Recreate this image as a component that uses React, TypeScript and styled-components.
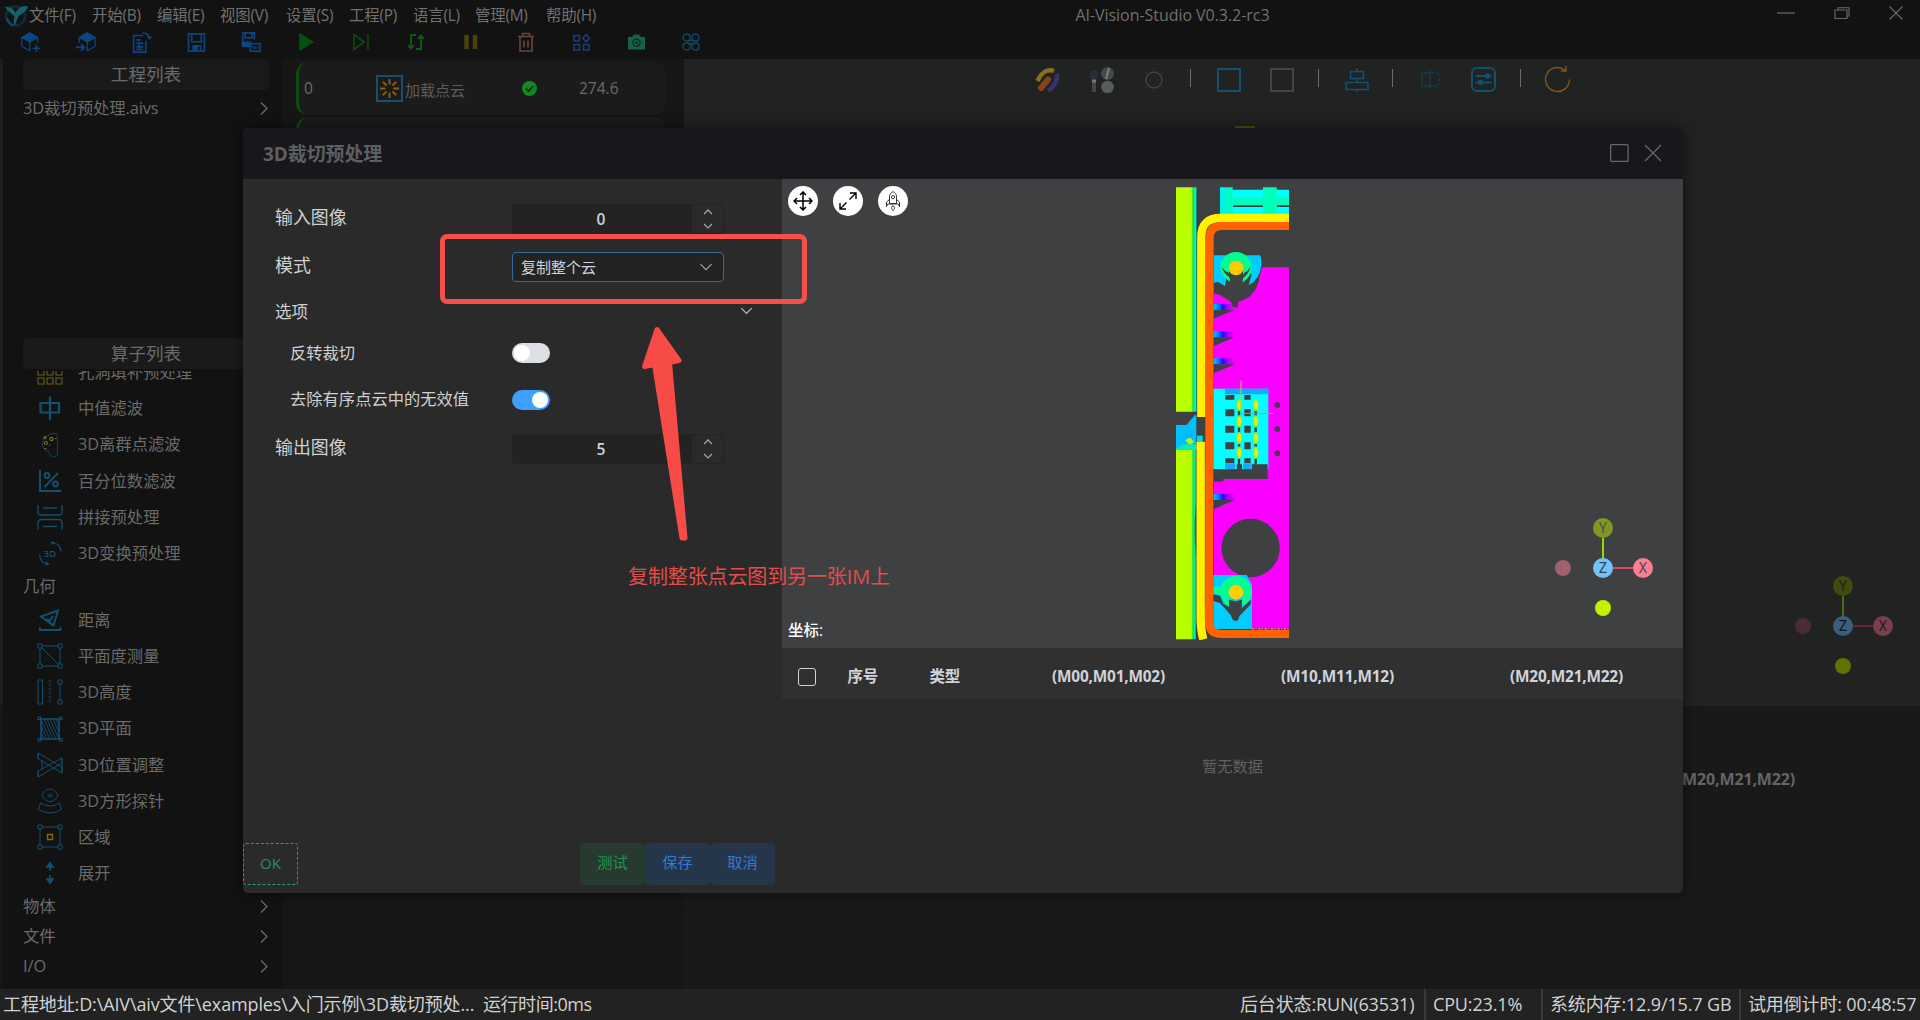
import React from "react";
import styled, { createGlobalStyle } from "styled-components";

const GlobalStyle = createGlobalStyle`
  * { box-sizing: border-box; }
  html, body { margin: 0; padding: 0; background: #121212; overflow: hidden; }
  body { font-family: "Open Sans", "Noto Sans CJK SC", sans-serif; font-size: 16px; line-height: 1; }
  svg { display: block; flex: none; }
`;

const blue = "#134f70";
const toolBlue = "#0b4683";
const olive = "#66601c";

/* ---------- window frame ---------- */

const Window = styled.div`
  position: relative;
  width: 1920px;
  height: 1020px;
  display: flex;
  flex-direction: column;
  background: #121212;
  color: #6b6b6b;
  overflow: hidden;
  white-space: nowrap;
`;

const Header = styled.header`
  height: 59px;
  flex: none;
  display: flex;
  flex-direction: column;
`;

const TitleBar = styled.div`
  height: 30px;
  display: grid;
  grid-template-columns: 1fr auto 1fr;
  align-items: center;
  padding-right: 17px;
`;

const MenuBar = styled.nav`
  display: flex;
  align-items: center;
  padding-left: 4px;
`;

const MenuItem = styled.span<{ $w: number }>`
  width: ${(p) => p.$w}px;
  font-size: 15.4px;
  letter-spacing: -0.2px;
  color: #707070;
  padding-top: 2px;
`;

const AppTitle = styled.span`
  font-size: 16px;
  letter-spacing: -0.05px;
  color: #707070;
  padding-left: 442px;
`;

const WindowControls = styled.div`
  display: flex;
  justify-content: flex-end;
  align-items: center;
  gap: 39px;
  padding-bottom: 4px;
`;

const Toolbar = styled.div`
  display: flex;
  padding-left: 3.5px;
  height: 24px;
`;

const ToolButton = styled.div`
  width: 55px;
  display: flex;
  align-items: center;
  justify-content: center;
`;

const Body = styled.div`
  flex: 1;
  display: flex;
  min-height: 0;
`;

/* ---------- sidebar ---------- */

const Edge = styled.div`
  width: 3px;
  background: linear-gradient(#1d1e1e 0 646px, #161616 646px);
`;

const Sidebar = styled.aside`
  width: 280px;
  display: flex;
  flex-direction: column;
  background: #121212;
`;

const ProjectPane = styled.section`
  height: 279px;
  padding-left: 20px;
`;

const OperatorPane = styled.section`
  flex: 1;
  min-height: 0;
  padding-left: 20px;
  display: flex;
  flex-direction: column;
`;

const PaneTitle = styled.h2`
  margin: 0;
  width: 246px;
  height: 31px;
  flex: none;
  display: flex;
  align-items: center;
  justify-content: center;
  border-radius: 5px;
  background: #1a1a1a;
  font-size: 17.6px;
  font-weight: 400;
  color: #6a6a6a;
`;

const GroupRow = styled.div<{ $h: number }>`
  height: ${(p) => p.$h}px;
  width: 245px;
  display: flex;
  align-items: center;
  justify-content: space-between;
  font-size: 16.4px;
  letter-spacing: -0.1px;
  color: #6a6a6a;
`;

const OperatorScroll = styled.div`
  margin-top: 2px;
  flex: 1;
  min-height: 0;
  overflow: hidden;
`;

const OperatorList = styled.div`
  margin-top: -16.8px;
`;

const OperatorRow = styled.div`
  height: 36.15px;
  display: flex;
  align-items: center;
  gap: 15px;
  padding-left: 14px;
  font-size: 16.3px;
  color: #6a6a6a;
`;

/* ---------- flow list ---------- */

const FlowPane = styled.section`
  width: 401px;
  background: #161616;
  padding: 3px 0 0 13px;
  display: flex;
  flex-direction: column;
  gap: 2px;
`;

const FlowCard = styled.div`
  width: 370px;
  height: 53px;
  flex: none;
  border-radius: 12px;
  border-left: 3px solid #0c4a10;
  background: #1b1b1b;
  display: grid;
  grid-template-columns: 72px 29px 117px 57px 1fr;
  align-items: center;
  padding-left: 5px;
  font-size: 15.5px;
`;

const FlowIcon = styled.div`
  width: 27px;
  height: 27px;
  border: 2px solid #17506e;
  display: flex;
  align-items: center;
  justify-content: center;
`;

const FlowName = styled.span`
  font-size: 15px;
  padding-top: 3px;
  color: #5c5c5c;
`;

/* ---------- background viewer ---------- */

const Stage = styled.main`
  flex: 1;
  display: flex;
  flex-direction: column;
  background: #191919;
`;

const StageCanvas = styled.div`
  position: relative;
  height: 647px;
  background: #202322;
`;

const StageTools = styled.div`
  display: flex;
  align-items: center;
  height: 41px;
  padding-left: 351px;
`;

const ToolSlot = styled.div<{ $w: number }>`
  width: ${(p) => p.$w}px;
  display: flex;
  align-items: center;
`;

const ToolDivider = styled.i`
  width: 1px;
  height: 18px;
  margin-top: -3px;
  background: #6b6b6b;
`;

const BackGizmo = styled.div`
  position: absolute;
  left: 1109px;
  top: 517px;
`;

const PointTip = styled.div`
  position: absolute;
  left: 551px;
  top: 67px;
  width: 20px;
  height: 2px;
  background: #4d4f12;
`;

const StageTable = styled.div`
  display: flex;
  justify-content: flex-end;
  padding: 65px 125px 0 0;
  font-size: 16px;
  font-weight: 700;
  letter-spacing: -0.15px;
  color: #656565;
`;

/* ---------- status bar ---------- */

const StatusBar = styled.footer`
  height: 31px;
  flex: none;
  display: flex;
  align-items: center;
  background: #222;
  color: #d2d2d2;
  font-size: 18px;
  letter-spacing: -0.15px;
  padding: 0 0 1px 3px;
`;

const StatusPath = styled.span`
  width: 480px;
  letter-spacing: -0.12px;
`;

const StatusTime = styled.span`
  letter-spacing: -0.45px;
`;

const StatusCell = styled.span<{ $w: number }>`
  width: ${(p) => p.$w}px;
  height: 31px;
  margin-bottom: -1px;
  display: flex;
  align-items: center;
  padding: 0 0 1px 7px;
  border-left: 2px solid #3a3a3a;
`;

const StatusRun = styled.span`
  margin-left: auto;
  width: 184px;
`;

/* ---------- dialog ---------- */

const Dialog = styled.section`
  position: absolute;
  left: 243px;
  top: 128px;
  width: 1440px;
  height: 765px;
  display: flex;
  flex-direction: column;
  border-radius: 5px;
  background: #2a2a2a;
  box-shadow: 0 0 14px rgba(0, 0, 0, 0.5);
  overflow: hidden;
`;

const DialogHead = styled.div`
  height: 51px;
  flex: none;
  display: flex;
  align-items: center;
  padding: 0 21px 1px 20px;
  background: #18171c;
`;

const DialogTitle = styled.h1`
  margin: 0 auto 0 0;
  padding-top: 2px;
  font-size: 18.9px;
  font-weight: 700;
  color: #5e5f62;
`;

const DialogBody = styled.div`
  flex: 1;
  display: flex;
  min-height: 0;
`;

const FormPane = styled.div`
  width: 539px;
  display: flex;
  flex-direction: column;
  padding-top: 16px;
`;

const FormRow = styled.div<{ $h: number; $indent?: boolean }>`
  height: ${(p) => p.$h}px;
  display: grid;
  grid-template-columns: ${(p) => (p.$indent ? 222 : 237)}px 212px 1fr;
  align-items: center;
  padding-left: ${(p) => (p.$indent ? 47 : 32)}px;
`;

const Label = styled.label<{ $size: number; $up?: number }>`
  font-size: ${(p) => p.$size}px;
  padding-bottom: ${(p) => p.$up ?? 0}px;
  color: #cfd0d2;
`;

const NumberBox = styled.div`
  height: 30px;
  display: flex;
  border-radius: 4px;
  background: #232323;
`;

const NumberValue = styled.span`
  width: 178px;
  display: flex;
  align-items: center;
  justify-content: center;
  padding-top: 2px;
  font-size: 15.5px;
  font-weight: 600;
  color: #cfd3dc;
`;

const Steppers = styled.div`
  width: 31px;
  margin: 1px 0 1px 2px;
  display: flex;
  flex-direction: column;
  align-items: center;
  justify-content: space-around;
  border-radius: 0 4px 4px 0;
  background: #2a2a2a;
`;

const SelectBox = styled.div`
  height: 30px;
  display: flex;
  align-items: center;
  justify-content: space-between;
  padding: 0 10px 0 8px;
  border: 1px solid #34699f;
  border-radius: 4px;
  background: #232323;
  color: #cfd3dc;
  font-size: 15px;
`;

const FoldMark = styled.div`
  padding: 0 0 2px 16px;
`;

const Switch = styled.div<{ $on?: boolean }>`
  width: 38px;
  height: 20px;
  display: flex;
  align-items: center;
  justify-content: ${(p) => (p.$on ? "flex-end" : "flex-start")};
  padding: 0 2px;
  border-radius: 10px;
  background: ${(p) => (p.$on ? "#409eff" : "#dcdfe6")};
  &::after {
    content: "";
    width: 16px;
    height: 16px;
    border-radius: 50%;
    background: #fff;
  }
`;

const FormFooter = styled.div`
  margin-top: auto;
  height: 50px;
  display: flex;
  padding-right: 7px;
`;

const OkButton = styled.button`
  width: 55px;
  height: 42px;
  margin: 0 auto 0 0;
  padding: 0 0 2px;
  border: 1px dashed #2f9e63;
  border-radius: 3px;
  background: transparent;
  color: #2c915c;
  font: inherit;
  font-size: 15px;
`;

const ActionButton = styled.button<{ $tone: "green" | "blue" }>`
  width: 65px;
  height: 42px;
  padding: 0 0 2px;
  border: 0;
  border-radius: 4px;
  background: ${(p) => (p.$tone === "green" ? "#273a2f" : "#26364a")};
  color: ${(p) => (p.$tone === "green" ? "#259458" : "#2f7bd3")};
  font: inherit;
  font-size: 15.2px;
`;

const ResultPane = styled.div`
  flex: 1;
  display: flex;
  flex-direction: column;
`;

const CloudView = styled.div`
  position: relative;
  height: 469px;
  display: flex;
  flex-direction: column;
  justify-content: space-between;
  padding: 7px 5px 10px 6px;
  background: #3f4041;
`;

const ViewButtons = styled.div`
  display: flex;
  gap: 15px;
`;

const RoundButton = styled.div`
  width: 30px;
  height: 30px;
  display: flex;
  align-items: center;
  justify-content: center;
  border-radius: 50%;
  background: #fff;
`;

const CloudLayer = styled.div`
  position: absolute;
  left: 394px;
  top: 8px;
`;

const FrontGizmo = styled.div`
  position: absolute;
  left: 771px;
  top: 339px;
`;

const Coords = styled.span`
  font-size: 15.5px;
  font-weight: 500;
  color: #fff;
`;

const TableHead = styled.div`
  height: 51px;
  display: grid;
  grid-template-columns: 66px 82px 107px 229px 229px 1fr;
  align-items: center;
  padding: 6px 0 0 15px;
  background: #303030;
  color: #cfd3dc;
  font-size: 15.4px;
  font-weight: 700;
  letter-spacing: -0.2px;
`;

const HeadWord = styled.span`
  font-size: 15.5px;
  margin-left: -15.500px;
`;

const CheckBox = styled.i`
  width: 18px;
  height: 18px;
  margin-top: 1px;
  margin-left: 0.500px;
  border: 1.5px solid #cfd3dc;
  border-radius: 3px;
`;

const Empty = styled.div`
  padding-top: 60px;
  text-align: center;
  font-size: 15.2px;
  color: #616164;
`;

/* ---------- annotation layer ---------- */

const RedFrame = styled.div`
  position: absolute;
  left: 440px;
  top: 234px;
  width: 367px;
  height: 70px;
  border: 5px solid #f44f49;
  border-radius: 7px;
`;

const ArrowLayer = styled.div`
  position: absolute;
  left: 636px;
  top: 320px;
`;

const RedNote = styled.div`
  position: absolute;
  left: 628px;
  top: 567px;
  font-size: 20px;
  letter-spacing: -0.12px;
  color: #e34c47;
`;

/* ---------- icons ---------- */

type IconProps = {
  w?: number;
  h?: number;
  box?: string;
  color?: string;
  sw?: number;
  children: React.ReactNode;
};

const Icon = ({ w = 24, h = w, box = "0 0 24 24", color = blue, sw = 1.5, children }: IconProps) => (
  <svg width={w} height={h} viewBox={box} fill="none" stroke={color} strokeWidth={sw}>
    {children}
  </svg>
);

const Chevron = ({ dir, size = 13, color = "#6f6f6f", sw = 1.2 }: { dir: "right" | "up" | "down"; size?: number; color?: string; sw?: number }) => {
  if (dir === "right")
    return (
      <Icon w={size / 2 + 2} h={size + 2} box="0 0 8.5 15" color={color} sw={sw}>
        <path d="M1 1.5l6 6-6 6" />
      </Icon>
    );
  return (
    <Icon w={size + 2} h={size / 2 + 2} box="0 0 15 8.5" color={color} sw={sw * (15 / (size + 2))}>
      <path d={dir === "up" ? "M1.5 7.2l6-6 6 6" : "M1.5 1.2l6 6 6-6"} />
    </Icon>
  );
};

const Logo = () => (
  <svg width="25" height="25" viewBox="0 0 25 25" fill="none">
    <circle cx="11.500" cy="13" r="9.500" stroke="#0b2a3c" strokeWidth="3" />
    <path d="M1 4c5-1 8 1 10.500 6C14 5 18 2 24 3.500 22.500 8 20 10 16.500 11.500c-3 2-3.500 5-5.500 11.500-2-5-1-8-.500-9.500C8 10.500 4 9 1 4z" fill="#15606b" />
    <path d="M3 15c1 4 3 6 6 7.500" stroke="#0f4f60" strokeWidth="2" />
  </svg>
);

const tools: React.ReactNode[] = [
  <Icon color={toolBlue} w={20}>
    <path d="M10.500 1L20 6.500l-9.500 5.500L1 6.500z" fill={toolBlue} />
    <path d="M1 6.500V17l9.500 5.500V12M20 6.500V13" />
    <path d="M18.500 15v9M14 19.500h9" strokeWidth={2} />
  </Icon>,
  <Icon color={toolBlue} w={20}>
    <path d="M13.500 1L23 6.500 13.500 12 4 6.500z" fill={toolBlue} />
    <path d="M23 6.500V17l-9.500 5.500V12M4 6.500V13" />
    <path d="M0 18.500h9M6 14.500l4 4-4 4" strokeWidth={2.2} />
  </Icon>,
  <Icon color={toolBlue} w={21}>
    <path d="M14 4H3v19h14V10M6 9h5M6 13h8M6 17h8M6 20h8M9 11v9" strokeWidth={1.8} />
    <path d="M13 1.500c5-.500 7.500 1.500 8 6M18.500 5l2.500 3 2.500-3" strokeWidth={1.6} />
  </Icon>,
  <Icon color={toolBlue} w={19}>
    <path d="M2 1h20v22H2z" strokeWidth={2} />
    <path d="M6 1h12v10H6zM8 23v-7h9v7" strokeWidth={2} />
    <path d="M8 16h5v7H8z" fill={toolBlue} />
  </Icon>,
  <Icon color={toolBlue} w={20}>
    <path d="M2 1h14v9M2 1v16h8M5 1v6h8V1" strokeWidth={2} />
    <path d="M3 12h9v5H3z" fill={toolBlue} />
    <path d="M11 14h12v9H11zM14 17v3M17 17v3M20 17v3" strokeWidth={1.7} />
  </Icon>,
  <Icon w={16} h={20} box="0 0 16 20" color="#07510e">
    <path d="M2 2l12.500 8L2 18z" fill="#07510e" />
  </Icon>,
  <Icon w={18} h={18} box="0 0 18 18" color="#0d4a14" sw={1.6}>
    <path d="M2 1.500l10 7.500L2 16.500zM16 1v16" />
  </Icon>,
  <Icon w={18} h={18} box="0 0 18 18" color="#0f5a16" sw={1.9}>
    <path d="M9 2H4v13M1 12l3 3.500L7 12M9 16h5V3M11 6l3-3.500L17 6" />
  </Icon>,
  <Icon w={16} h={16} box="0 0 16 16" color="#4b400f" sw={4.5}>
    <path d="M3.500 1v14M12 1v14" />
  </Icon>,
  <Icon w={18} h={20} box="0 0 18 20" color="#6a4440" sw={1.6}>
    <path d="M1 4.500h16M5.500 4.500V1.500h7v3M3 4.500V19h12V4.500M7 8.500v7M11 8.500v7" />
  </Icon>,
  <Icon w={17} h={17} box="0 0 17 17" color="#1d3c78" sw={1.6}>
    <path d="M1 1.500h5.500V7H1zM1 10.500h5.500V16H1zM10.500 10.500H16V16h-5.500zM13.200.500l3.400 3.700-3.400 3.700-3.400-3.700z" />
  </Icon>,
  <Icon w={19} h={16} box="0 0 19 16" color="none">
    <path d="M1 3h4l2-2.500h5L14 3h4v12.500H1z" fill="#176246" />
    <circle cx="9.500" cy="8.700" r="3.600" stroke="#10231b" strokeWidth="1.200" />
    <circle cx="9.500" cy="8.700" r="1.300" fill="#10231b" />
  </Icon>,
  <Icon w={18} h={18} box="0 0 18 18" color="#124563" sw={1.4}>
    <rect x="1" y="1" width="7" height="7" rx="3.200" />
    <rect x="10" y="1" width="7" height="7" rx="3.200" />
    <rect x="1" y="10" width="7" height="7" rx="3.200" />
    <rect x="10" y="10" width="7" height="7" rx="3.200" />
    <path d="M6 7.500h6M6 10.500h6" />
  </Icon>,
];

const opIcon = (color: string, body: React.ReactNode, sw = 1.1) => (
  <Icon w={26} box="0 0 26 26" color={color} sw={sw}>
    {body}
  </Icon>
);

const OP = {
  grid: opIcon(
    olive,
    <path d="M1 1h6v6H1zM10 1h6v6h-6zM19 1h6v6h-6zM1 10h6v6H1zM10 10h6v6h-6zM19 10h6v6h-6zM1 19h6v6H1zM10 19h6v6h-6zM19 19h6v6h-6z" />
  ),
  median: opIcon(blue, <path d="M3.500 8h18.500v9.500H3.500zM13 1.500V25" />, 2.2),
  outlier: opIcon(
    blue,
    <>
      <path d="M11 4c2-3.500 9-3.500 9.500 0v17c0 5-7 5-8 0-1-4-4-1-6-5C4 10 6 6 11 4z" opacity="0.700" />
      <g stroke="#77701a" strokeWidth="1.200">
        <circle cx="14.500" cy="7" r="1.700" />
        <circle cx="9" cy="11" r="1.500" />
        <circle cx="8" cy="5.500" r="1" />
        <path d="M12 13h1.500M7.500 16.500h2M18 6.500h1.500" />
      </g>
    </>
  ),
  percent: opIcon(
    blue,
    <>
      <path d="M3 2v21h21M7.500 19L21 5" />
      <circle cx="10" cy="7.500" r="2.400" />
      <circle cx="18.500" cy="16" r="2.400" />
    </>,
    2
  ),
  stitch: opIcon(blue, <path d="M1 1v6.500q0 3.500 3.500 3.500h17q3.500 0 3.500-3.500V1M6 4h14M1 25.500V19q0-3.500 3.500-3.500h17q3.500 0 3.500 3.500v6.500M6 22.500h14" />, 1.3),
  transform: opIcon(
    blue,
    <>
      <path d="M15 2.500c5 .500 8.500 4 9 9M11 24c-5-.500-8-4-8.500-9" />
      <path d="M13 2.500l4-1.500v4zM13 24l-4 1.500v-4z" fill={blue} stroke="none" />
      <text x="13" y="16.500" fill={blue} stroke="none" fontSize="9.500" fontWeight="600" textAnchor="middle">
        3D
      </text>
    </>,
    1.2
  ),
  distance: opIcon(blue, <path d="M4 9.500L21 3.500 16.500 18.500zM10 12l3 1.500 3-4.500M3 20.500V23h20.500v-2.500" />, 2),
  flatness: opIcon(
    blue,
    <path d="M1 1h4v4H1zM21 1h4v4h-4zM1 21h4v4H1zM21 21h4v4h-4zM5 3h16M5 23h16M3 5v16M23 5v16M5 5l16 16" />,
    1
  ),
  height: opIcon(
    blue,
    <>
      <path d="M1 1h4.500v24H1zM21 1h4v4h-4zM21 21h4v4h-4zM23 5v16" />
      <path d="M13 1v24" strokeDasharray="2.500 1.500" />
    </>,
    1
  ),
  plane: opIcon(
    blue,
    <>
      <path d="M4 3h18v20H4z" strokeWidth="1.600" />
      <path d="M1 1h2.500v2.500H1zM22.500 1H25v2.500h-2.500zM1 22.500h2.500V25H1zM22.500 22.500H25V25h-2.500z" />
      <path d="M4 4l9 19M7 3l9 20M10 3l9 20M13 3l9 20M16 3l6 13M19 3l3 7M4 10l6 13M4 16l3 7" strokeWidth="0.900" />
    </>
  ),
  adjust: opIcon(blue, <path d="M1 1l24 14v6L1 6.500zM1 25l24-14V6L1 19zM1 1v6M25 6v15M1 19v6M5 8v10" />, 1),
  probe: opIcon(
    blue,
    <path d="M5 7.500C9-1 17-1 21 7.500 17 15.500 9 15.500 5 7.500zM10.500 7.500q2.500-3 5 0-2.500 3-5 0M3.500 15q9.500 6 19 0l2 6.500q-11.500 7-23 0z" />,
    1
  ),
  region: opIcon(
    blue,
    <>
      <path d="M1 1h4v4H1zM21 1h4v4h-4zM1 21h4v4H1zM21 21h4v4h-4zM5 3h16M5 23h16M3 5v16M23 5v16" />
      <path d="M10.500 10.500h5v5h-5z" stroke="#7a6d14" strokeWidth="1.400" />
    </>,
    1
  ),
  expand: opIcon(blue, <path d="M13 5v6M13 15v6M10 7l3-4 3 4zM10 19l3 4 3-4z" fill={blue} />, 1.7),
};

const firstOps: [React.ReactNode, string][] = [
  [OP.grid, "孔洞填补预处理"],
  [OP.median, "中值滤波"],
  [OP.outlier, "3D离群点滤波"],
  [OP.percent, "百分位数滤波"],
  [OP.stitch, "拼接预处理"],
  [OP.transform, "3D变换预处理"],
];

const geometryOps: [React.ReactNode, string][] = [
  [OP.distance, "距离"],
  [OP.flatness, "平面度测量"],
  [OP.height, "3D高度"],
  [OP.plane, "3D平面"],
  [OP.adjust, "3D位置调整"],
  [OP.probe, "3D方形探针"],
  [OP.region, "区域"],
  [OP.expand, "展开"],
];

const menus: [string, number][] = [
  ["文件(F)", 63],
  ["开始(B)", 65],
  ["编辑(E)", 63],
  ["视图(V)", 66],
  ["设置(S)", 63],
  ["工程(P)", 64],
  ["语言(L)", 62],
  ["管理(M)", 71],
  ["帮助(H)", 56],
];

const Gizmo = ({ dim }: { dim?: boolean }) => {
  const c = dim
    ? { y: "#414b10", z: "#38607e", x: "#7c3f4d", nx: "#4a2c34", ny: "#5f7400", ly: "#4b6b0e", lx: "#6f2230", t: "#10161a" }
    : { y: "#829525", z: "#74c1fb", x: "#fd7d95", nx: "#9f6070", ny: "#c3f000", ly: "#93d90f", lx: "#d34a61", t: "#33414a" };
  return (
    <svg width="100" height="100" viewBox="0 0 100 100" fontSize="14" textAnchor="middle" fontFamily="Roboto">
      <path d="M50 50V20" stroke={c.ly} strokeWidth="2" />
      <path d="M50 50H84" stroke={c.lx} strokeWidth="2" />
      <circle cx="50" cy="10" r="10" fill={c.y} />
      <circle cx="10" cy="50" r="8" fill={c.nx} />
      <circle cx="90" cy="50" r="10" fill={c.x} />
      <circle cx="50" cy="50" r="10" fill={c.z} />
      <circle cx="50" cy="90" r="8" fill={c.ny} />
      <text x="50" y="15" fill={c.t} opacity="0.700">Y</text>
      <text x="50" y="55" fill={c.t}>Z</text>
      <text x="90" y="55" fill={c.t} opacity="0.800">X</text>
    </svg>
  );
};

const bg = "#3f4041";

const PointCloud = () => (
  <svg width="113" height="453" viewBox="48 51 339 1359">
    <defs>
      <linearGradient id="edge" x1="0" x2="1">
        <stop offset="0" stopColor="#78f000" />
        <stop offset="0.400" stopColor="#00e878" />
        <stop offset="1" stopColor="#00ffee" />
      </linearGradient>
      <linearGradient id="slot" x1="0" x2="1">
        <stop offset="0" stopColor="#00c8ff" />
        <stop offset="0.340" stopColor="#0050ff" />
        <stop offset="0.420" stopColor="#3000ff" />
        <stop offset="0.650" stopColor="#a800ff" />
        <stop offset="1" stopColor="#fa00ff" />
      </linearGradient>
      <linearGradient id="teal" x1="0" x2="1">
        <stop offset="0" stopColor="#00f0f0" />
        <stop offset="1" stopColor="#00ffb8" />
      </linearGradient>
    </defs>
    {/* left rail */}
    <path d="M48 52h48v673H48zM48 838h48v570H48z" fill="#b9ff00" />
    <path d="M95 52h14v673H95zM95 838h12v570H95z" fill="url(#edge)" />
    <path d="M48 765h32l14-18 11-12h4v103H48z" fill="#00bfff" />
    <path d="M48 838q14-14 30-16l31 2v16H48z" fill="#00f0b0" />
    <path d="M76 812q8-12 18-6l8 10-12 8z" fill="#b9f020" />
    <path d="M107 1000q-6 80 0 160v-160z" fill={bg} />
    {/* connector at the top */}
    <path d="M180 59h207v73H180z" fill="#00ffff" />
    <path d="M180 52h38v80h-38z" fill="url(#teal)" />
    <path d="M218 82h169v24H218zM309 52h41v80h-41z" fill="#00ffbb" />
    <path d="M220 106h89v5h-89zM351 106h36v5h-36z" fill={bg} />
    {/* seal */}
    <path d="M387 144H182q-58 0-58 56V741" fill="none" stroke="#fff200" strokeWidth="25" />
    <path d="M122 815V1340q0 40 8 68" fill="none" stroke="#fff200" strokeWidth="25" />
    <path d="M111 797h17v19h-17z" fill="#00d8f0" />
    {/* base plate */}
    <path d="M306 292h81v1084H161V370l20 6 25 15 10 10 2 11h16v-15q20-8 36-18 24-22 29-60z" fill="#fa00ff" />
    {[402, 484, 565, 972].map((y) => (
      <rect key={y} x="161" y={y} width="64" height="18" fill="url(#slot)" />
    ))}
    <path d="M161 420h62l-62 26zM161 502h62l-62 26zM161 583h64l-64 27zM161 990h62l-62 28z" fill={bg} />
    <path d="M216 396h18v16h-16z" fill={bg} />
    {/* upper screw post */}
    <path d="M161 256h40v60l-6 32-20-12-14 2zM255 256h44q6 4 5 30-4 42-38 60l8-30z" fill="#00ccff" />
    <path d="M181 294a47 48 0 1 1 94 0q0 14-6 22-8 14-22 22l4-22-6-22h-34l-6 22 10 20-10-4q-14-10-18-20-6-8-6-18z" fill="#00ff90" />
    <path d="M184 290q10 14 22 18l2 14q-16-12-24-32zM272 290q-10 14-20 20l-6 16q18-10 26-36z" fill={bg} />
    <path d="M208 312h38l-4 60-14 30-14-30z" fill={bg} />
    <circle cx="228" cy="294" r="22" fill="#ffc800" />
    {/* circuit board */}
    <path d="M160 656h165v242H160z" fill="#00ffff" />
    <path d="M195 656h130v17H195zM195 880h30v20h-30zM249 880h26v20h-26z" fill="#14a8ff" />
    {[675, 718, 767, 817, 865].map((y, i) => (
      <path key={y} d={`M196 ${y}h27v${i % 4 ? 21 : 14}h-27zM253 ${y}h19v${i % 4 ? 21 : 14}h-19z`} fill={bg} />
    ))}
    {[237, 287].map((x) => (
      <g key={x}>
        <path d={`M${x} 700V885`} stroke={bg} strokeWidth="7" />
        {[705, 754, 804, 848].map((y) => (
          <g key={y}>
            <ellipse cx={x} cy={y} rx="8" ry="19" fill="#7cf04a" />
            <ellipse cx={x + 1} cy={y} rx="6" ry="13" fill="#f0e800" />
          </g>
        ))}
      </g>
    ))}
    <path d="M160 898h70v-15h16v15h30v-15h47v44H190v8h-28z" fill={bg} />
    <path d="M243 632v90" stroke="#c8c820" strokeWidth="3" />
    <path d="M243 730h97" stroke="#f0802a" strokeWidth="3" />
    {[705, 777, 850].map((y) => (
      <circle key={y} cx="352" cy={y} r="8.500" fill={bg} />
    ))}
    <circle cx="272" cy="1134" r="87.500" fill={bg} />
    {/* lower screw post */}
    <path d="M160 1215h100l16 30v132H160z" fill="#00ccff" />
    <path d="M160 1250l22 2a47 47 0 1 1 92 28l-12 24q-12 4-18-4l4-26h-40l2 26-2 10q-14-4-26-36l-20-2z" fill="#00ff90" />
    <path d="M160 1273l20 4 10 24 18 10-2-22 20 5 20-5-1 26 27-26v14l-34 36-4 12-8 2-8-4-6-14-32-36-20-6z" fill={bg} />
    <path d="M247 1284l2 20q12-2 20-20z" fill="#00ff90" />
    <circle cx="228" cy="1267" r="22" fill="#ffd000" />
    <path d="M276 1377h111" stroke="#b0a060" strokeWidth="4" strokeDasharray="7 4 3 5" />
    {/* inner frame */}
    <path d="M387 168H185q-36 0-36 36l-2 1152q0 36 38 36H387" fill="none" stroke="#ff6200" strokeWidth="24" />
  </svg>
);

const StageIcons = () => (
  <StageTools>
    <ToolSlot $w={54}>
      <Icon w={25} h={25} box="0 0 25 25" sw={4.5} color="#86701a">
        <path d="M2.500 14C6 6 12 1.500 19 4" />
        <path d="M6 21L13 12.500" stroke="#86401a" strokeWidth="6" strokeLinecap="round" />
        <path d="M21.500 7c2 6-3 13-8 17" stroke="#38336c" />
      </Icon>
    </ToolSlot>
    <ToolSlot $w={53}>
      <Icon w={26} h={26} box="0 0 26 26" color="none">
        <rect x="1" y="3" width="8" height="10" rx="4" fill="#262f38" />
        <path d="M3 13h4v12H3z" fill="#444746" />
        <path d="M3 12.500h4v3H3z" fill="#747474" />
        <circle cx="18.500" cy="6.500" r="6.500" fill="#474a4b" />
        <circle cx="18.500" cy="20" r="6.300" fill="#5a5d5f" />
        <path d="M20 1l-3 11" stroke="#7c7e80" strokeWidth="2" />
      </Icon>
    </ToolSlot>
    <ToolSlot $w={48}>
      <Icon w={24} color="#454746" sw={1.3}>
        <circle cx="12" cy="12" r="8" />
        <path d="M12 0v2M12 22v2M0 12h2M22 12h2M3.500 3.500l1.500 1.500M19 19l1.500 1.500M3.500 20.500L5 19M19 5l1.500-1.500" stroke="#303332" />
      </Icon>
    </ToolSlot>
    <ToolSlot $w={27}>
      <ToolDivider />
    </ToolSlot>
    <ToolSlot $w={53}>
      <Icon sw={2}>
        <path d="M1 1h22v22H1z" />
      </Icon>
    </ToolSlot>
    <ToolSlot $w={48}>
      <Icon sw={2} color="#444645">
        <path d="M1 1h22v22H1z" />
      </Icon>
    </ToolSlot>
    <ToolSlot $w={27}>
      <ToolDivider />
    </ToolSlot>
    <ToolSlot $w={47}>
      <Icon sw={1.6}>
        <path d="M5.500 3.500h13v7h-13zM1 14.500h22v7H1zM12 0v3.500M12 10.500v4M12 21.500V24" />
      </Icon>
    </ToolSlot>
    <ToolSlot $w={29}>
      <ToolDivider />
    </ToolSlot>
    <ToolSlot $w={50}>
      <Icon w={19} h={19} box="0 0 19 19" color="#163d52" sw={1.3}>
        <path d="M9 3H1v13h8M9 0v19" />
        <path d="M10 3h8v13h-8" strokeDasharray="2.500 2" />
      </Icon>
    </ToolSlot>
    <ToolSlot $w={49}>
      <Icon w={25} h={25} box="0 0 25 25" sw={2}>
        <rect x="1" y="1" width="23" height="23" rx="5" />
        <path d="M4.500 9h16M4.500 15.500h16" />
        <circle cx="16.500" cy="9" r="1.700" fill={blue} />
        <circle cx="9.500" cy="15.500" r="1.700" fill={blue} />
      </Icon>
    </ToolSlot>
    <ToolSlot $w={24}>
      <ToolDivider />
    </ToolSlot>
    <Icon w={27} h={27} box="0 0 27 27" color="#86541a" sw={1.4}>
      <path d="M25.500 13.500a12 12 0 1 1-4.500-9.400M22 0v5h-5" />
    </Icon>
  </StageTools>
);

const NumberField = ({ value }: { value: string }) => (
  <NumberBox>
    <NumberValue>{value}</NumberValue>
    <Steppers>
      <Chevron dir="up" size={8} color="#a3a6ad" />
      <Chevron dir="down" size={8} color="#a3a6ad" />
    </Steppers>
  </NumberBox>
);

export default function App() {
  return (
    <>
      <GlobalStyle />
      <Window>
        <Header>
          <TitleBar>
            <MenuBar>
              <Logo />
              {menus.map(([name, w]) => (
                <MenuItem key={name} $w={w}>
                  {name}
                </MenuItem>
              ))}
            </MenuBar>
            <AppTitle>AI-Vision-Studio V0.3.2-rc3</AppTitle>
            <WindowControls>
              <Icon w={18} h={14} box="0 0 18 14" color="#6b6b6b" sw={1.2}>
                <path d="M0 7h18" />
              </Icon>
              <Icon w={16} h={12} box="0 0 16 12" color="#6b6b6b" sw={1.1}>
                <path d="M1 3h12v8.500H1zM4 3V.800h11V9h-2" />
              </Icon>
              <Icon w={14} h={14} box="0 0 14 14" color="#6b6b6b" sw={1.1}>
                <path d="M.500.500l13 13M13.500.500l-13 13" />
              </Icon>
            </WindowControls>
          </TitleBar>
          <Toolbar>
            {tools.map((t, i) => (
              <ToolButton key={i}>{t}</ToolButton>
            ))}
          </Toolbar>
        </Header>

        <Body>
          <Edge />
          <Sidebar>
            <ProjectPane>
              <PaneTitle>工程列表</PaneTitle>
              <GroupRow $h={36}>
                3D裁切预处理.aivs
                <Chevron dir="right" />
              </GroupRow>
            </ProjectPane>
            <OperatorPane>
              <PaneTitle>算子列表</PaneTitle>
              <OperatorScroll>
                <OperatorList>
                  {firstOps.map(([icon, name]) => (
                    <OperatorRow key={name}>
                      {icon}
                      {name}
                    </OperatorRow>
                  ))}
                  <GroupRow $h={31}>几何</GroupRow>
                  {geometryOps.map(([icon, name]) => (
                    <OperatorRow key={name}>
                      {icon}
                      {name}
                    </OperatorRow>
                  ))}
                  {["物体", "文件", "I/O"].map((name) => (
                    <GroupRow key={name} $h={30.2}>
                      {name}
                      <Chevron dir="right" />
                    </GroupRow>
                  ))}
                </OperatorList>
              </OperatorScroll>
            </OperatorPane>
          </Sidebar>

          <FlowPane>
            <FlowCard>
              <span>0</span>
              <FlowIcon>
                <Icon w={19} h={19} box="0 0 19 19" color="#8c5f16" sw={1.9}>
                  <path d="M9.500 0v5.500M9.500 13.500V19M0 9.500h5.500M13.500 9.500H19M2.800 2.800l3.700 3.700M12.500 12.500l3.700 3.700M2.800 16.200l3.700-3.700M12.500 6.500l3.700-3.700" />
                </Icon>
              </FlowIcon>
              <FlowName>加载点云</FlowName>
              <Icon w={15} h={15} box="0 0 15 15" color="#1a1a1a" sw={1.6}>
                <circle cx="7.500" cy="7.500" r="7.500" fill="#118a1c" stroke="none" />
                <path d="M3.800 7.500l2.700 2.800L11.200 5" />
              </Icon>
              <span>274.6</span>
            </FlowCard>
            <FlowCard />
          </FlowPane>

          <Stage>
            <StageCanvas>
              <StageIcons />
              <PointTip />
              <BackGizmo>
                <Gizmo dim />
              </BackGizmo>
            </StageCanvas>
            <StageTable>(M20,M21,M22)</StageTable>
          </Stage>
        </Body>

        <StatusBar>
          <StatusPath>工程地址:D:\AIV\aiv文件\examples\入门示例\3D裁切预处...</StatusPath>
          <StatusTime>运行时间:0ms</StatusTime>
          <StatusRun>后台状态:RUN(63531)</StatusRun>
          <StatusCell $w={117}>CPU:23.1%</StatusCell>
          <StatusCell $w={198}>系统内存:12.9/15.7 GB</StatusCell>
          <StatusCell $w={181}>试用倒计时: 00:48:57</StatusCell>
        </StatusBar>

        <Dialog>
          <DialogHead>
            <DialogTitle>3D裁切预处理</DialogTitle>
            <Icon w={52} h={18} box="0 0 52 18" color="#6a6a6e" sw={1.2}>
              <rect x="0.600" y="0.600" width="17.500" height="16.800" rx="1" />
              <path d="M35 1l16 16M51 1L35 17" />
            </Icon>
          </DialogHead>
          <DialogBody>
            <FormPane>
              <FormRow $h={48}>
                <Label $size={17.9} $up={2}>输入图像</Label>
                <NumberField value="0" />
              </FormRow>
              <FormRow $h={48}>
                <Label $size={17.9} $up={2}>模式</Label>
                <SelectBox>
                  复制整个云
                  <Chevron dir="down" size={12} color="#a3a6ad" />
                </SelectBox>
              </FormRow>
              <FormRow $h={42}>
                <Label $size={16.5}>选项</Label>
                <span />
                <FoldMark>
                  <Chevron dir="down" size={11} color="#c0c2c6" />
                </FoldMark>
              </FormRow>
              <FormRow $h={40} $indent>
                <Label $size={16.3}>反转裁切</Label>
                <Switch />
              </FormRow>
              <FormRow $h={53} $indent>
                <Label $size={16.3}>去除有序点云中的无效值</Label>
                <Switch $on />
              </FormRow>
              <FormRow $h={46}>
                <Label $size={17.9} $up={2}>输出图像</Label>
                <NumberField value="5" />
              </FormRow>
              <FormFooter>
                <OkButton>OK</OkButton>
                <ActionButton $tone="green">测试</ActionButton>
                <ActionButton $tone="blue">保存</ActionButton>
                <ActionButton $tone="blue">取消</ActionButton>
              </FormFooter>
            </FormPane>

            <ResultPane>
              <CloudView>
                <CloudLayer>
                  <PointCloud />
                </CloudLayer>
                <ViewButtons>
                  <RoundButton>
                    <Icon w={20} h={20} box="0 0 20 20" color="#000" sw={1.5}>
                      <path d="M10 1v18M1 10h18M7 4l3-3 3 3M7 16l3 3 3-3M4 7l-3 3 3 3M16 7l3 3-3 3" />
                    </Icon>
                  </RoundButton>
                  <RoundButton>
                    <Icon w={18} h={18} box="0 0 18 18" color="#000" sw={1.4}>
                      <path d="M10.500 7.500L17 1M11 1h6v6M7.500 10.500L1 17M7 17H1v-6" />
                    </Icon>
                  </RoundButton>
                  <RoundButton>
                    <Icon w={16} h={20} box="0 0 16 20" color="#222" sw={0.9}>
                      <path d="M4.500 12.500V6C4.500 3 6 1.500 8 .700 10 1.500 11.500 3 11.500 6v6.500zM4.500 8.500L1.500 11v4.500l1-2.500h11l1 2.500V11l-3-2.500M8 14.500c-2.500 2-1 4 0 5 1-1 2.500-3 0-5z" />
                      <circle cx="8" cy="6.200" r="1.600" />
                    </Icon>
                  </RoundButton>
                </ViewButtons>
                <FrontGizmo>
                  <Gizmo />
                </FrontGizmo>
                <Coords>坐标:</Coords>
              </CloudView>
              <TableHead>
                <CheckBox />
                <HeadWord>序号</HeadWord>
                <HeadWord>类型</HeadWord>
                <span>(M00,M01,M02)</span>
                <span>(M10,M11,M12)</span>
                <span>(M20,M21,M22)</span>
              </TableHead>
              <Empty>暂无数据</Empty>
            </ResultPane>
          </DialogBody>
        </Dialog>

        <RedFrame />
        <ArrowLayer>
          <svg width="54" height="224" viewBox="0 0 54 224" fill="#f64b46" stroke="#f64b46" strokeWidth="5" strokeLinejoin="round">
            <path d="M21 9.500L43 40.500 33.500 42.500 49 218 46 218 18.500 44.500 8.500 46.500z" />
          </svg>
        </ArrowLayer>
        <RedNote>复制整张点云图到另一张IM上</RedNote>
      </Window>
    </>
  );
}
